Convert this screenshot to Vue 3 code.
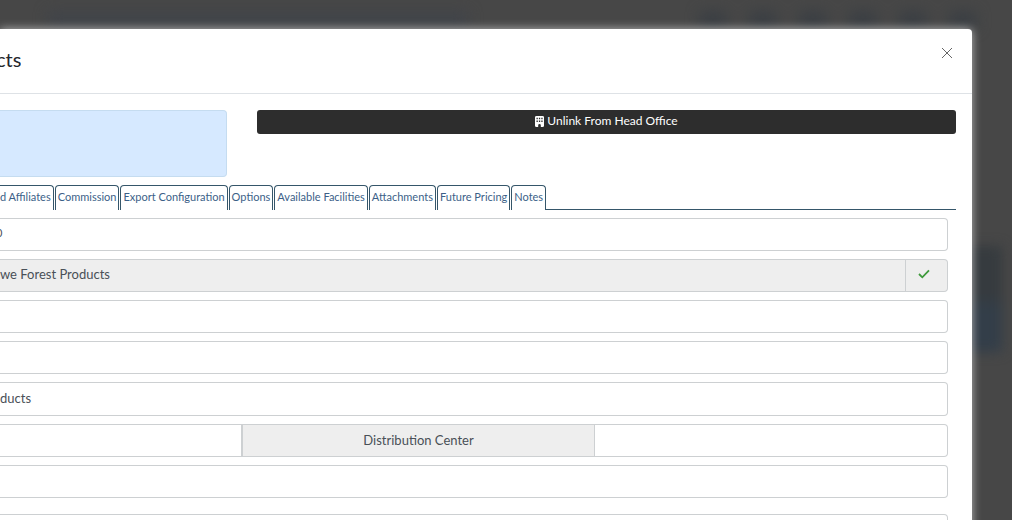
<script setup>
import { ref } from 'vue'

const tabs = [
  'd Affiliates', 'Commission', 'Export Configuration', 'Options',
  'Available Facilities', 'Attachments', 'Future Pricing', 'Notes',
]
const number = ref('0')
const headOffice = ref('we Forest Products')
const legalName = ref('ducts')
const blank = ref(['', '', '', '', '', ''])
const marks = [1, 2, 3, 4, 5, 6]
</script>

<template>
  <div class="screen">
    <div class="behind" aria-hidden="true">
      <div class="toolbar">
        <i class="trail"></i>
        <i v-for="m in marks" :key="m" class="mark"></i>
      </div>
      <div class="side"></div>
    </div>

    <section class="modal" role="dialog" aria-labelledby="title">
      <header class="head">
        <h1 id="title">cts</h1>
        <button class="close" type="button" aria-label="Close">
          <svg viewBox="0 0 12 12" width="12" height="12"><path d="M1 1 11 11M11 1 1 11" fill="none" stroke="currentColor" stroke-width="1" /></svg>
        </button>
      </header>

      <div class="body">
        <div class="top">
          <div class="notice"></div>
          <button class="unlink" type="button">
            <svg viewBox="0 0 9 11" width="9" height="11">
              <path fill="currentColor" fill-rule="evenodd" d="M1.5 0h6Q9 0 9 1.300v8.400Q9 11 7.500 11H5.800V9.200Q5.800 8 4.500 8T3.200 9.200V11H1.500Q0 11 0 9.700V1.300Q0 0 1.500 0ZM1.500 1.800v1.400h1.300V1.800ZM3.900 1.800v1.400h1.300V1.800ZM6.300 1.800v1.400h1.300V1.800ZM1.500 4.600V6h1.300V4.600ZM3.900 4.600V6h1.300V4.600ZM6.300 4.600V6h1.300V4.600Z" />
            </svg>
            <span>Unlink From Head Office</span>
          </button>
        </div>

        <nav class="tabs" role="tablist">
          <button v-for="t in tabs" :key="t" class="tab" type="button" role="tab">{{ t }}</button>
          <span class="rule"></span>
        </nav>

        <form class="fields" @submit.prevent>
          <div class="field"><input v-model="number" class="small" type="text" aria-label="Number"></div>
          <div class="field muted">
            <input v-model="headOffice" type="text" aria-label="Head office" readonly>
            <span class="addon">
              <svg viewBox="0 0 12 10" width="12" height="10"><path d="M1 5 4.300 8.300 11 1.300" fill="none" stroke="#3f9a3c" stroke-width="1.800" /></svg>
            </span>
          </div>
          <div class="field"><input v-model="blank[0]" type="text" aria-label="Address"></div>
          <div class="field"><input v-model="blank[1]" type="text" aria-label="Address line 2"></div>
          <div class="field tall"><input v-model="legalName" type="text" aria-label="Legal name"></div>
          <div class="field split">
            <input v-model="blank[2]" type="text" aria-label="Branch">
            <label class="caption" for="center">Distribution Center</label>
            <input id="center" v-model="blank[3]" type="text">
          </div>
          <div class="field"><input v-model="blank[4]" type="text" aria-label="Contact"></div>
          <div class="field later"><input v-model="blank[5]" type="text" aria-label="Details"></div>
        </form>
      </div>
    </section>
  </div>
</template>

<style>
html, body { margin: 0; background: #474747; }
</style>

<style scoped>
* { box-sizing: border-box; }
.screen {
  position: relative;
  height: 100vh;
  overflow: hidden;
  padding: 29px 40px 0 0;
  background: #474747;
  color: #3c4045;
  font-family: Lato, "Liberation Sans", sans-serif;
}
.behind { position: absolute; inset: 0; }
.toolbar {
  display: flex;
  justify-content: flex-end;
  gap: 24px;
  padding: 12px 36px 0 48px;
  filter: blur(7px);
}
.trail { width: 420px; height: 14px; margin-right: auto; background: #40444a; }
.mark { width: 26px; height: 16px; background: #393e43; }
.side {
  position: absolute;
  top: 246px;
  right: 10px;
  width: 44px;
  height: 106px;
  background: linear-gradient(#363b3f 45%, #333e49 60%);
  filter: blur(6px);
}
.modal {
  position: relative;
  min-height: 100%;
  background: #fff;
  border-radius: 0 4px 0 0;
  box-shadow: 0 0 1px #777, 0 0 10px #bbb;
}
.head {
  display: flex;
  justify-content: space-between;
  align-items: flex-start;
  height: 65px;
  padding: 14px 15px 0 0;
  border-bottom: 1px solid #dee2e6;
}
h1 {
  margin: 0;
  font-size: 20px;
  line-height: 32px;
  font-weight: 400;
  color: #25282c;
  text-indent: -4px;
  overflow: hidden;
}
.close {
  display: flex;
  padding: 4px;
  border: 0;
  background: none;
  color: #666;
}
.body { padding: 16px 16px 0 0; }
.top {
  display: flex;
  align-items: flex-start;
  gap: 30px;
}
.notice {
  flex: 226 1 0;
  height: 67px;
  background: #d6e9ff;
  border: 1px solid #c5dcf0;
  border-left: 0;
  border-radius: 0 4px 4px 0;
}
.unlink {
  flex: 699 1 0;
  display: flex;
  justify-content: center;
  align-items: center;
  gap: 3px;
  height: 24px;
  padding: 0 0 2px;
  border: 0;
  border-radius: 3px;
  background: #2d2d2d;
  color: #fff;
  font: 400 12px/18px Lato, "Liberation Sans", sans-serif;
}
.tabs {
  display: flex;
  gap: 1px;
  margin-top: 8px;
}
.tab {
  height: 25px;
  padding: 0 2px 3px;
  border: 1px solid #35566a;
  border-bottom: 0;
  border-radius: 4px 4px 0 0;
  background: #fff;
  color: #3c5f88;
  font: 400 11px/20px Lato, "Liberation Sans", sans-serif;
  white-space: nowrap;
}
.tab:first-child {
  padding-left: 0;
  border-left: 0;
  border-radius: 0 4px 0 0;
}
.rule { flex: 1; margin-left: -1px; border-bottom: 1px solid #35566a; }
.fields {
  display: flex;
  flex-direction: column;
  gap: 8px;
  padding: 8px 8px 0 0;
}
.field {
  display: flex;
  height: 33px;
  border: 1px solid #cdd0d2;
  border-left: 0;
  border-radius: 0 4px 4px 0;
  overflow: hidden;
}
.tall { height: 34px; }
input {
  flex: 1;
  min-width: 0;
  padding: 0 0 3px;
  border: 0;
  outline: 0;
  background: none;
  color: #495057;
  font: 400 13px/20px Lato, "Liberation Sans", sans-serif;
}
.small { font-size: 11px; text-indent: -4px; }
.muted { background: #eee; }
.addon {
  display: flex;
  justify-content: center;
  align-items: center;
  width: 42px;
  padding: 0 6px 3px 0;
  border-left: 1px solid #cdd0d2;
}
.split { display: grid; grid-template-columns: 241fr 354fr 352fr; }
.caption {
  padding: 5px 0;
  border: solid #cdd0d2;
  border-width: 0 1px 0 2px;
  background: #eee;
  color: #495057;
  font-size: 13px;
  line-height: 20px;
  text-align: center;
}
.later { margin-top: 8px; }
</style>
